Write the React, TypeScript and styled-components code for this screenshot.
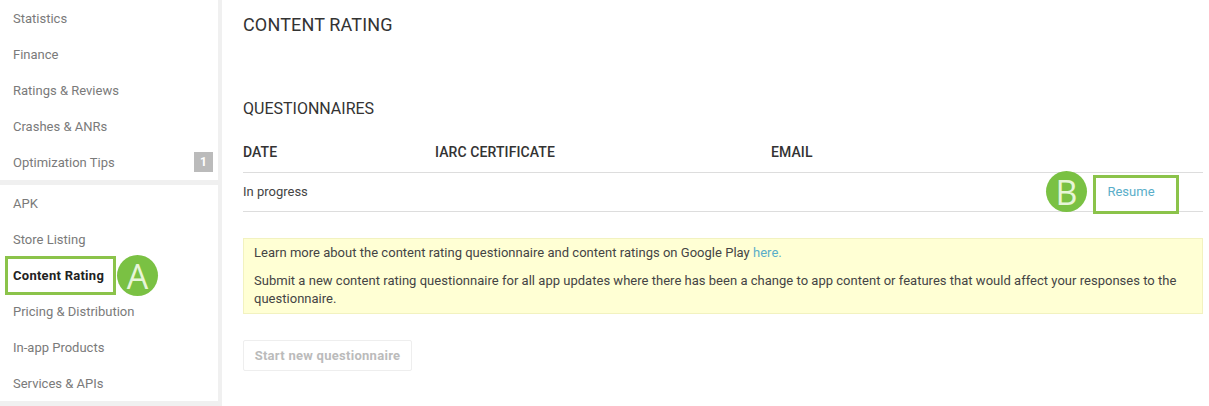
import React from "react";
import styled, { createGlobalStyle } from "styled-components";

const Global = createGlobalStyle`
  html, body { margin: 0; padding: 0; background: #fff; }
  body { font-family: Roboto, "Liberation Sans", Arial, sans-serif; overflow: hidden; }
`;
const Page = styled.div`
  width: 1209px; height: 406px; display: flex; overflow: hidden; background: #fff;
`;
const Sidebar = styled.nav`
  width: 222px; flex: none; height: 406px; box-sizing: border-box; background: #f0f0f0;
  padding: 0 4px 0 0; display: flex; flex-direction: column; gap: 5px;
`;
const Group = styled.div<{ $h: number }>`
  height: ${p => p.$h}px; flex: none; background: #fff; box-sizing: border-box;
`;
const Item = styled.div<{ $h?: number; $active?: boolean }>`
  height: ${p => p.$h ?? 36}px; display: flex; align-items: center; justify-content: space-between;
  padding: 0 5px 0 13px; font-size: 13px;
  color: ${p => (p.$active ? "#222" : "#7a7a7a")};
  font-weight: ${p => (p.$active ? 700 : 400)};
  letter-spacing: ${p => (p.$active ? "0.27px" : "0")};
  position: relative;
`;
const Badge = styled.span`
  width: 19px; height: 20px; background: #bbb; color: #fff; font-size: 12px; font-weight: 700;
  display: flex; align-items: center; justify-content: center;
`;
const HighlightA = styled.span`
  position: absolute; left: 5px; top: -1px; width: 111px; height: 39px;
  border: 3px solid #8bc34a; box-sizing: border-box;
`;
const Circle = styled.span<{ $l: number; $t: number }>`
  position: absolute; left: ${p => p.$l}px; top: ${p => p.$t}px; width: 41px; height: 41px;
  border-radius: 50%; background: #7ac143; color: #e8f5d8; font-size: 34px; font-weight: 400;
  letter-spacing: 0;
  display: flex; align-items: center; justify-content: center;
  font-family: "Open Sans", sans-serif;
`;
const Main = styled.main`
  flex: 1; box-sizing: border-box; padding: 14px 6px 0 21px; color: #333; position: relative;
`;
const Title = styled.h1`
  margin: 0; font-size: 18px; font-weight: 400; line-height: 22px; color: #333; letter-spacing: 0.15px;
`;
const Section = styled.h2`
  margin: 63px 0 0; font-size: 16px; font-weight: 400; line-height: 20px; color: #333;
`;
const HeadRow = styled.div`
  display: grid; grid-template-columns: 192px 336px 1fr; height: 38px; margin-top: 16px;
  align-items: center; font-size: 14px; font-weight: 500; color: #333; letter-spacing: 0.1px;
  border-bottom: 1px solid #ddd; box-sizing: border-box; padding-bottom: 3px;
`;
const Row = styled.div`
  display: flex; justify-content: space-between; align-items: center; height: 39px;
  border-bottom: 1px solid #ddd; font-size: 13px; color: #444; position: relative;
  box-sizing: border-box; padding-bottom: 2px;
`;
const ResumeBox = styled.span`
  position: absolute; left: 850px; top: 2px; width: 86px; height: 39px; box-sizing: border-box;
  border: 3px solid #8bc34a; background: #fff; color: #5aaec9; font-size: 13px;
  display: flex; align-items: center; justify-content: center; padding: 0 10px 6px 0;
`;
const Notice = styled.div`
  margin-top: 26px; background: #ffffd4; border: 1px solid #f2f2c0; height: 76px;
  box-sizing: border-box; padding: 5px 10px 0; font-size: 13px; line-height: 18px; color: #444;
  letter-spacing: 0.02px;
`;
const NoticeP = styled.p`
  margin: 0 0 10px;
`;
const Link = styled.a`
  color: #5aaec9;
`;
const Button = styled.button`
  display: block; margin-top: 26px; width: 169px; height: 31px; background: #fff;
  border: 1px solid #eee; border-radius: 2px; color: #bbb; font: 700 13px Roboto, sans-serif;
  letter-spacing: 0.28px; padding: 0;
`;

export default function App() {
  return (
    <Page>
      <Global />
      <Sidebar>
        <Group $h={180}>
          {["Statistics", "Finance", "Ratings & Reviews", "Crashes & ANRs"].map(t => (
            <Item key={t}>{t}</Item>
          ))}
          <Item>Optimization Tips<Badge>1</Badge></Item>
        </Group>
        <Group $h={216}>
          <Item>APK</Item>
          <Item>Store Listing</Item>
          <Item $active>
            Content Rating
            <HighlightA />
            <Circle $l={117} $t={-2}>A</Circle>
          </Item>
          <Item>Pricing &amp; Distribution</Item>
          <Item>In-app Products</Item>
          <Item>Services &amp; APIs</Item>
        </Group>
      </Sidebar>
      <Main>
        <Title>CONTENT RATING</Title>
        <Section>QUESTIONNAIRES</Section>
        <HeadRow><span>DATE</span><span>IARC CERTIFICATE</span><span>EMAIL</span></HeadRow>
        <Row>
          In progress
          <Circle $l={803} $t={-2}>B</Circle>
          <ResumeBox>Resume</ResumeBox>
        </Row>
        <Notice>
          <NoticeP>Learn more about the content rating questionnaire and content ratings on Google Play <Link>here.</Link></NoticeP>
          <NoticeP>Submit a new content rating questionnaire for all app updates where there has been a change to app content or features that would affect your responses to the questionnaire.</NoticeP>
        </Notice>
        <Button>Start new questionnaire</Button>
      </Main>
    </Page>
  );
}
